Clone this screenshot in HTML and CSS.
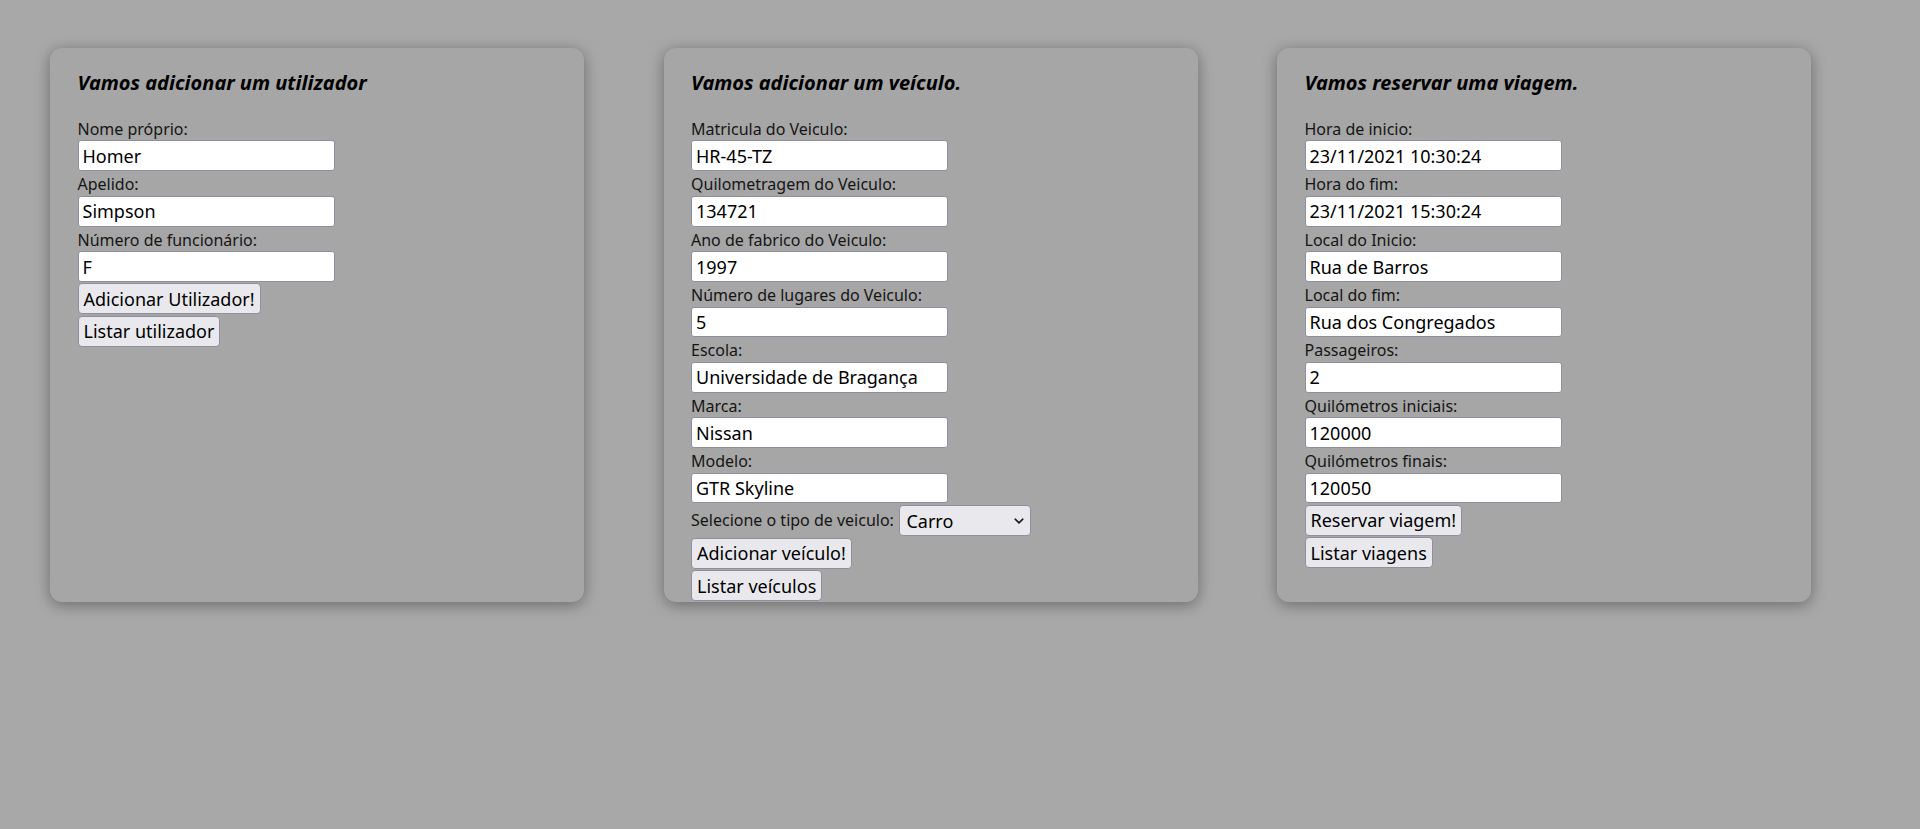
FILE: index.html
```html
<!DOCTYPE html>
<html lang="pt">
<head>
<meta charset="utf-8">
<title>Formulários</title>
<link rel="stylesheet" href="styles.css">
</head>
<body>
<main class="board">
  <section class="card">
    <h3 class="title">Vamos adicionar um utilizador</h3>
    <form class="form">
      <label class="lbl">Nome próprio:</label>
      <input class="field" type="text" value="Homer">
      <label class="lbl">Apelido:</label>
      <input class="field" type="text" value="Simpson">
      <label class="lbl">Número de funcionário:</label>
      <input class="field" type="text" value="F">
      <button class="btn" type="button">Adicionar Utilizador!</button>
      <button class="btn" type="button">Listar utilizador</button>
    </form>
  </section>

  <section class="card">
    <h3 class="title">Vamos adicionar um veículo.</h3>
    <form class="form">
      <label class="lbl">Matricula do Veiculo:</label>
      <input class="field" type="text" value="HR-45-TZ">
      <label class="lbl">Quilometragem do Veiculo:</label>
      <input class="field" type="text" value="134721">
      <label class="lbl">Ano de fabrico do Veiculo:</label>
      <input class="field" type="text" value="1997">
      <label class="lbl">Número de lugares do Veiculo:</label>
      <input class="field" type="text" value="5">
      <label class="lbl">Escola:</label>
      <input class="field" type="text" value="Universidade de Bragança">
      <label class="lbl">Marca:</label>
      <input class="field" type="text" value="Nissan">
      <label class="lbl">Modelo:</label>
      <input class="field" type="text" value="GTR Skyline">
      <div class="select-row">
        <label class="lbl inline">Selecione o tipo de veiculo:</label>
        <span class="select-wrap">
          <select class="select">
            <option>Carro</option>
            <option>Mota</option>
          </select>
          <svg class="chev" width="10" height="6" viewBox="0 0 10 6"><path d="M1.2 1.2 L5 4.8 L8.8 1.2" fill="none" stroke="#1a1a1a" stroke-width="1.6" stroke-linecap="round" stroke-linejoin="round"/></svg>
        </span>
      </div>
      <button class="btn" type="button">Adicionar veículo!</button>
      <button class="btn" type="button">Listar veículos</button>
    </form>
  </section>

  <section class="card">
    <h3 class="title">Vamos reservar uma viagem.</h3>
    <form class="form">
      <label class="lbl">Hora de inicio:</label>
      <input class="field" type="text" value="23/11/2021 10:30:24">
      <label class="lbl">Hora do fim:</label>
      <input class="field" type="text" value="23/11/2021 15:30:24">
      <label class="lbl">Local do Inicio:</label>
      <input class="field" type="text" value="Rua de Barros">
      <label class="lbl">Local do fim:</label>
      <input class="field" type="text" value="Rua dos Congregados">
      <label class="lbl">Passageiros:</label>
      <input class="field" type="text" value="2">
      <label class="lbl">Quilómetros iniciais:</label>
      <input class="field" type="text" value="120000">
      <label class="lbl">Quilómetros finais:</label>
      <input class="field" type="text" value="120050">
      <button class="btn" type="button">Reservar viagem!</button>
      <button class="btn" type="button">Listar viagens</button>
    </form>
  </section>
</main>
</body>
</html>
```

FILE: styles.css
```css
html, body {
  margin: 0;
  padding: 0;
  background: #a8a8a8;
  font-family: "Noto Sans", "Open Sans", sans-serif;
  color: #111;
}

.board {
  display: flex;
  align-items: flex-start;
  gap: 79.5px;
  padding: 48px 0 0 50px;
  height: 829px;
  box-sizing: border-box;
}

.card {
  width: 534px;
  height: 554px;
  box-sizing: border-box;
  padding: 20.7px 27.5px 0;
  background: #a6a6a6;
  border-radius: 12px;
  box-shadow: 0 3px 15px rgba(0, 0, 0, 0.36);
}

.title {
  margin: 0 0 21.6px;
  font-size: 20px;
  line-height: 27px;
  font-weight: 700;
  font-style: italic;
  color: #000;
}

.form {
  display: flex;
  flex-direction: column;
  align-items: flex-start;
}

.lbl {
  display: block;
  box-sizing: border-box;
  padding-top: 2.6px;
  font-size: 16px;
  line-height: 19.1px;
  color: #151515;
}

.lbl.inline {
  display: inline-block;
  padding-top: 0;
  line-height: 21.7px;
}

.field {
  box-sizing: border-box;
  width: 257px;
  height: 30.7px;
  margin: 1.5px 0;
  padding: 0 4px;
  border: 1px solid #8f8f9d;
  border-radius: 3px;
  background: #fff;
  font-family: "Noto Sans", "Open Sans", sans-serif;
  font-size: 18px;
  color: #000;
  outline: none;
}

.btn {
  box-sizing: border-box;
  height: 30.9px;
  margin: 0 0 1.5px;
  padding: 0 5px;
  border: 1px solid #8f8f9d;
  border-radius: 4px;
  background: #e9e9ed;
  font-family: "Noto Sans", "Open Sans", sans-serif;
  font-size: 18px;
  color: #000;
  line-height: 1;
}

.select-row {
  display: flex;
  align-items: center;
  gap: 5.5px;
  margin: 0 0 1.6px;
}

.select-wrap {
  position: relative;
  display: inline-block;
}

.select {
  appearance: none;
  -webkit-appearance: none;
  box-sizing: border-box;
  width: 132px;
  height: 31.3px;
  margin: 0;
  padding: 0 0 0 6px;
  border: 1px solid #8f8f9d;
  border-radius: 4px;
  background: #e9e9ed;
  font-family: "Noto Sans", "Open Sans", sans-serif;
  font-size: 18px;
  color: #000;
}

.chev {
  position: absolute;
  right: 7px;
  top: 13px;
  pointer-events: none;
}
```
